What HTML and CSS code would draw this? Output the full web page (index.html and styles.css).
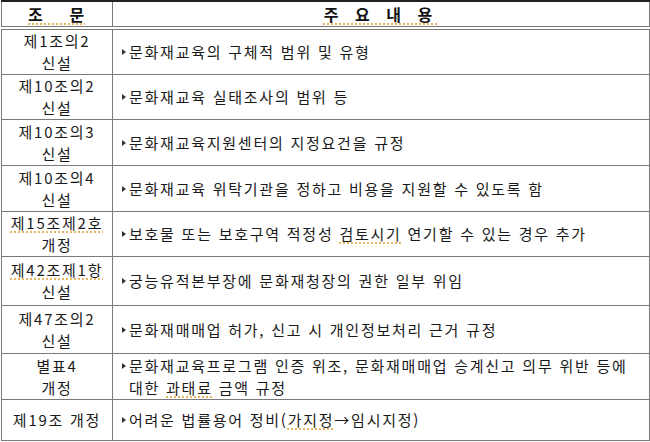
FILE: index.html
```html
<!DOCTYPE html>
<html lang="ko">
<head>
<meta charset="utf-8">
<link rel="stylesheet" href="styles.css">
</head>
<body>
<table class="law">
  <thead>
    <tr>
      <th class="col-art"><span class="sq">조&nbsp;&nbsp;&nbsp;&nbsp;문</span></th>
      <th class="col-main"><span class="sq">주 요 내 용</span></th>
    </tr>
  </thead>
  <tbody>
    <tr class="r1">
      <td class="art">제1조의2<br>신설</td>
      <td class="main"><span class="tri"></span>문화재교육의 구체적 범위 및 유형</td>
    </tr>
    <tr class="r2">
      <td class="art">제10조의2<br>신설</td>
      <td class="main"><span class="tri"></span>문화재교육 실태조사의 범위 등</td>
    </tr>
    <tr class="r3">
      <td class="art">제10조의3<br>신설</td>
      <td class="main"><span class="tri"></span>문화재교육지원센터의 지정요건을 규정</td>
    </tr>
    <tr class="r4">
      <td class="art">제10조의4<br>신설</td>
      <td class="main"><span class="tri"></span>문화재교육 위탁기관을 정하고 비용을 지원할 수 있도록 함</td>
    </tr>
    <tr class="r5">
      <td class="art"><span class="sq">제15조제2호</span><br>개정</td>
      <td class="main"><span class="tri"></span>보호물 또는 보호구역 적정성 <span class="sq">검토시기</span> 연기할 수 있는 경우 추가</td>
    </tr>
    <tr class="r6">
      <td class="art"><span class="sq">제42조제1항</span><br>신설</td>
      <td class="main"><span class="tri"></span>궁능유적본부장에 문화재청장의 권한 일부 위임</td>
    </tr>
    <tr class="r7">
      <td class="art">제47조의2<br>신설</td>
      <td class="main"><span class="tri"></span>문화재매매업 허가, 신고 시 개인정보처리 근거 규정</td>
    </tr>
    <tr class="r8">
      <td class="art">별표4<br>개정</td>
      <td class="main two"><span class="tri"></span>문화재교육프로그램 인증 위조, 문화재매매업 승계신고 의무 위반 등에<br>대한 <span class="sq">과태료</span> 금액 규정</td>
    </tr>
    <tr class="r9">
      <td class="art">제19조 개정</td>
      <td class="main"><span class="tri"></span>어려운 법률용어 정비(<span class="sq">가지정</span>→임시지정)</td>
    </tr>
  </tbody>
</table>
</body>
</html>
```

FILE: styles.css
```css
html, body {
  margin: 0;
  padding: 0;
  background: #ffffff;
}

body {
  font-family: "Noto Sans CJK KR", "Noto Sans", sans-serif;
  color: #1a1a1a;
}

.law {
  border-collapse: collapse;
  width: 649px;
  margin: 0 0 0 1px;
  table-layout: fixed;
  border: 1px solid #555555;
  border-top: 2px solid #222222;
}

.law th,
.law td {
  border: 1px solid #7a7a7a;
  padding: 0;
  font-size: 15px;
  letter-spacing: 1.75px;
  vertical-align: middle;
}

.col-art {
  width: 110px;
}

.law th {
  height: 24px;
  font-weight: bold;
  font-size: 16px;
  line-height: 18px;
  text-align: center;
  border-bottom: 4px double #777777;
  color: #111111;
}

.law th.col-main {
  letter-spacing: 6px;
}

.art {
  text-align: center;
  line-height: 22px;
  white-space: nowrap;
}

.main {
  padding-left: 16px !important;
  line-height: 22px;
  white-space: nowrap;
}

.r1 td { height: 44px; }
.r2 td { height: 44px; }
.r3 td { height: 45px; }
.r4 td { height: 45px; }
.r5 td { height: 44px; }
.r6 td { height: 48px; }
.r7 td { height: 47px; }
.r8 td { height: 45px; }
.r9 td { height: 40px; }

.tri {
  display: inline-block;
  width: 0;
  height: 0;
  border-left: 4px solid #333333;
  border-top: 3px solid transparent;
  border-bottom: 3px solid transparent;
  margin-left: -7px;
  margin-right: 3px;
  vertical-align: 3px;
}

.sq {
  text-decoration: underline dotted #e0a030;
  text-underline-offset: 3px;
}
```
